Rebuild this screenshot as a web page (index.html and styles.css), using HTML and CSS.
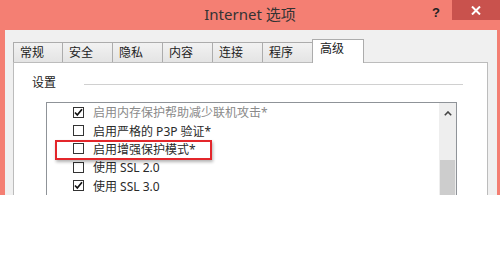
FILE: index.html
```html
<!DOCTYPE html>
<html lang="zh-CN">
<head>
    <meta charset="UTF-8">
    <title>Internet 选项</title>
    <link rel="stylesheet" href="styles.css">
</head>
<body>
    <div class="window">
        <div class="titlebar">
            <span></span>
            <span class="title">Internet 选项</span>
            <div class="controls">
                <span class="help">?</span>
                <span class="close">
                    <svg width="10" height="9" viewBox="0 0 10 9"><path d="M1 0.5 L9 8.5 M9 0.5 L1 8.5" stroke="#fff" stroke-width="2"/></svg>
                </span>
            </div>
        </div>
        <div class="dialog">
            <div class="tabs">
                <span class="tab">常规</span>
                <span class="tab">安全</span>
                <span class="tab">隐私</span>
                <span class="tab">内容</span>
                <span class="tab">连接</span>
                <span class="tab">程序</span>
                <span class="tab active">高级</span>
            </div>
            <div class="panel">
                <div class="group-head">
                    <span>设置</span>
                    <span class="rule"></span>
                </div>
                <div class="listbox">
                    <ul class="options">
                        <li class="opt muted"><span class="box"><svg width="11" height="11" viewBox="0 0 11 11"><path d="M2 5.5 L4.3 8 L9 2.2" fill="none" stroke="#111" stroke-width="1.7"/></svg></span>启用内存保护帮助减少联机攻击*</li>
                        <li class="opt"><span class="box"></span>启用严格的 P3P 验证*</li>
                        <li class="opt marked"><span class="box"></span>启用增强保护模式*<span class="highlight"></span></li>
                        <li class="opt"><span class="box"></span>使用 SSL 2.0</li>
                        <li class="opt"><span class="box"><svg width="11" height="11" viewBox="0 0 11 11"><path d="M2 5.5 L4.3 8 L9 2.2" fill="none" stroke="#111" stroke-width="1.7"/></svg></span>使用 SSL 3.0</li>
                    </ul>
                    <div class="scrollbar">
                        <span class="arrow"><svg width="8" height="5" viewBox="0 0 8 5"><path d="M0.8 4.2 L4 1 L7.2 4.2" fill="none" stroke="#444" stroke-width="1.6"/></svg></span>
                        <span class="track"></span>
                        <span class="thumb"></span>
                    </div>
                </div>
            </div>
        </div>
    </div>
</body>
</html>
```

FILE: styles.css
```css
body { margin: 0; background: #fff; font-family: "Noto Sans", "Noto Sans CJK SC", sans-serif; color: #222; }
.window { height: 195px; overflow: hidden; background: #f47f73; display: flex; flex-direction: column; }
.titlebar { height: 30px; flex: none; display: grid; grid-template-columns: 1fr auto 1fr; align-items: start; }
.title { font-size: 15px; line-height: 18px; margin-top: 5px; color: #333; }
.controls { display: flex; justify-content: flex-end; align-items: flex-start; }
.help { font-family: "Liberation Sans", sans-serif; font-weight: bold; font-size: 13px; line-height: 14px; margin-top: 6px; margin-right: 12px; color: #222; }
.close { width: 48px; height: 20px; background: #c9524d; display: flex; align-items: center; justify-content: center; }
.dialog { flex: 1; margin: 0 3px 0 5px; background: #f0f0f0; padding: 9px 9px 0 8px; display: flex; flex-direction: column; }

.tabs { display: flex; align-items: flex-end; height: 23px; flex: none; }
.tab { box-sizing: border-box; width: 50px; height: 20px; border: 1px solid #acacac; border-left: none; border-bottom: none; background: linear-gradient(#f2f2f2, #e4e4e4); font-size: 12px; line-height: 19px; padding-left: 6px; color: #222; }
.tab:first-child { border-left: 1px solid #acacac; width: 50px; }
.tab.active { width: 52px; height: 24px; margin-left: -1px; margin-bottom: -1px; border-left: 1px solid #acacac; background: #fff; line-height: 17px; padding-left: 7px; position: relative; z-index: 1; }

.panel { flex: 1; background: #fff; border: 1px solid #bcbcbc; border-bottom: none; margin-right: 0; }
.group-head { display: flex; align-items: center; margin: 12px 24px 0 18px; font-size: 12px; line-height: 16px; color: #222; }
.rule { flex: 1; border-top: 1px solid #d0d0d0; margin-left: 28px; margin-top: 2px; }

.listbox { display: flex; margin: 11px 30px 0 32px; height: 130px; border: 1px solid #8f9398; }
.options { flex: 1; list-style: none; margin: 0; padding: 0; }
.opt { display: flex; align-items: center; height: 18.4px; padding-left: 26px; font-size: 12px; color: #2a2a2a; white-space: nowrap; }
.opt.muted { color: #8a8a8a; }
.opt.marked { position: relative; }
.box { box-sizing: border-box; width: 11px; height: 11px; border: 1px solid #333; background: #fff; margin-right: 9px; display: flex; align-items: center; justify-content: center; flex: none; }
.box svg { margin: -1px; }
.highlight { position: absolute; left: 8px; top: 0; width: 157px; height: 20px; box-sizing: border-box; border: 2px solid #e3262b; box-shadow: 1px 2px 3px rgba(0, 0, 0, 0.3); }

.scrollbar { width: 17px; background: #eeeeee; display: flex; flex-direction: column; }
.arrow { height: 17px; display: flex; align-items: center; justify-content: center; padding-top: 2px; }
.track { height: 38px; }
.thumb { flex: 1; background: #cdcdcd; margin: 0 1px; }
```
